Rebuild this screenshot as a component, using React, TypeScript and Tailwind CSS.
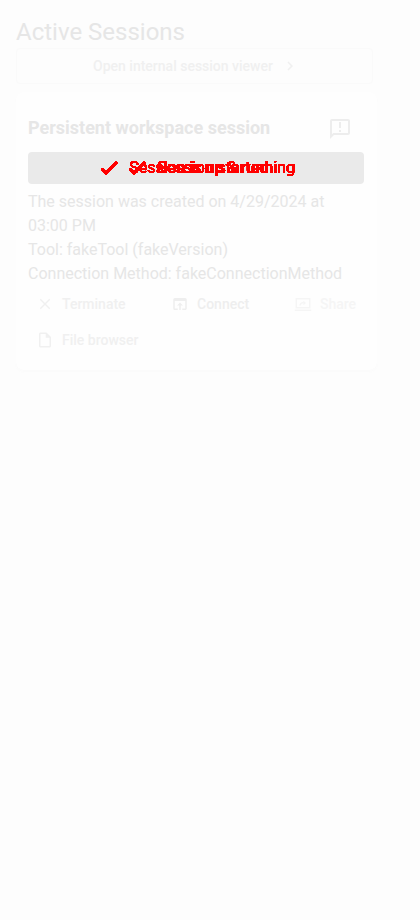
import React from "react";
import {
  MdChevronRight,
  MdClose,
  MdOpenInBrowser,
  MdOutlineAnnouncement,
  MdOutlineInsertDriveFile,
} from "react-icons/md";

type ActionProps = { icon: React.ReactNode; label: string; className?: string };

function Action({ icon, label, className = "" }: ActionProps) {
  return (
    <button className={`flex h-9 items-center gap-2 text-sm leading-6 font-medium ${className}`}>
      {icon}
      <span>{label}</span>
    </button>
  );
}

function ShareIcon() {
  return (
    <svg width="18" height="18" viewBox="0 0 24 24" fill="none" stroke="currentColor">
      <path d="M3 5h18v12H3z" strokeWidth="2" />
      <path d="M1 20.3h22" strokeWidth="2" />
      <path d="M8 14c.4-2.600 2-4 5-4" strokeWidth="1.800" />
      <path d="M12.500 7.500 16 10.600l-3.500 3z" fill="currentColor" stroke="none" />
    </svg>
  );
}

function CheckIcon() {
  return (
    <svg width="24" height="24" viewBox="0 0 24 24" fill="none" stroke="currentColor">
      <path d="M4.700 12.800 9 17.100 19.900 6.200" strokeWidth="2.900" />
    </svg>
  );
}

type StatusProps = { label: string; className: string };

function Status({ label, className }: StatusProps) {
  return (
    <div className={`absolute top-0 flex items-center gap-2 [filter:url(#hard-edge)] ${className}`}>
      <CheckIcon />
      <span className="whitespace-nowrap [text-shadow:0.4px_0_#ff0000]">{label}</span>
    </div>
  );
}

export default function App() {
  return (
    <main className="min-h-[920px] bg-[#fdfdfd] px-4 pt-4 font-[Roboto,sans-serif] text-[#e6e6e6]">
      <svg width="0" height="0" className="absolute">
        <filter id="hard-edge" colorInterpolationFilters="sRGB">
          <feComponentTransfer>
            <feFuncA type="linear" slope="30" intercept="-3" />
          </feComponentTransfer>
        </filter>
      </svg>
      <h1 className="h-8 text-2xl leading-8 font-normal">Active Sessions</h1>
      <button className="flex h-9 w-[357px] items-center justify-center gap-2 rounded border border-[#fafafa] pl-[3px] text-sm font-medium text-[#f0f0f0]">
        <span>Open internal session viewer</span>
        <MdChevronRight size={18} />
      </button>
      <section className="mt-2 h-[278px] w-[361px] rounded-lg bg-[#fefefe] px-3 pt-5 shadow-[0_2px_3px_#fbfbfb]">
        <div className="flex h-10 items-start justify-between pr-[13px]">
          <h2 className="pt-0.5 text-lg leading-7 font-bold">Persistent workspace session</h2>
          <MdOutlineAnnouncement size={24} className="mt-[5px] text-[#ededed]" />
        </div>
        <div className="relative h-8 w-[336px] rounded bg-[#eaeaea] text-base leading-8 text-[#ff0000]">
          <Status className="left-[69px]" label="Session is up &amp; running" />
          <Status className="left-[97px]" label="Session started" />
        </div>
        <div className="mt-1.5 text-base leading-6">
          <p>The session was created on 4/29/2024 at 03:00 PM</p>
          <p>Tool: fakeTool (fakeVersion)</p>
          <p>Connection Method: fakeConnectionMethod</p>
        </div>
        <div className="flex flex-wrap text-[#f0f0f0]">
          <Action className="w-[143px] pl-2" icon={<MdClose size={18} />} label="Terminate" />
          <Action className="w-[123px] text-[#eeeeee]" icon={<MdOpenInBrowser size={18} />} label="Connect" />
          <Action className="text-[#f5f5f5]" icon={<ShareIcon />} label="Share" />
          <Action className="pl-2" icon={<MdOutlineInsertDriveFile size={18} />} label="File browser" />
        </div>
      </section>
    </main>
  );
}
